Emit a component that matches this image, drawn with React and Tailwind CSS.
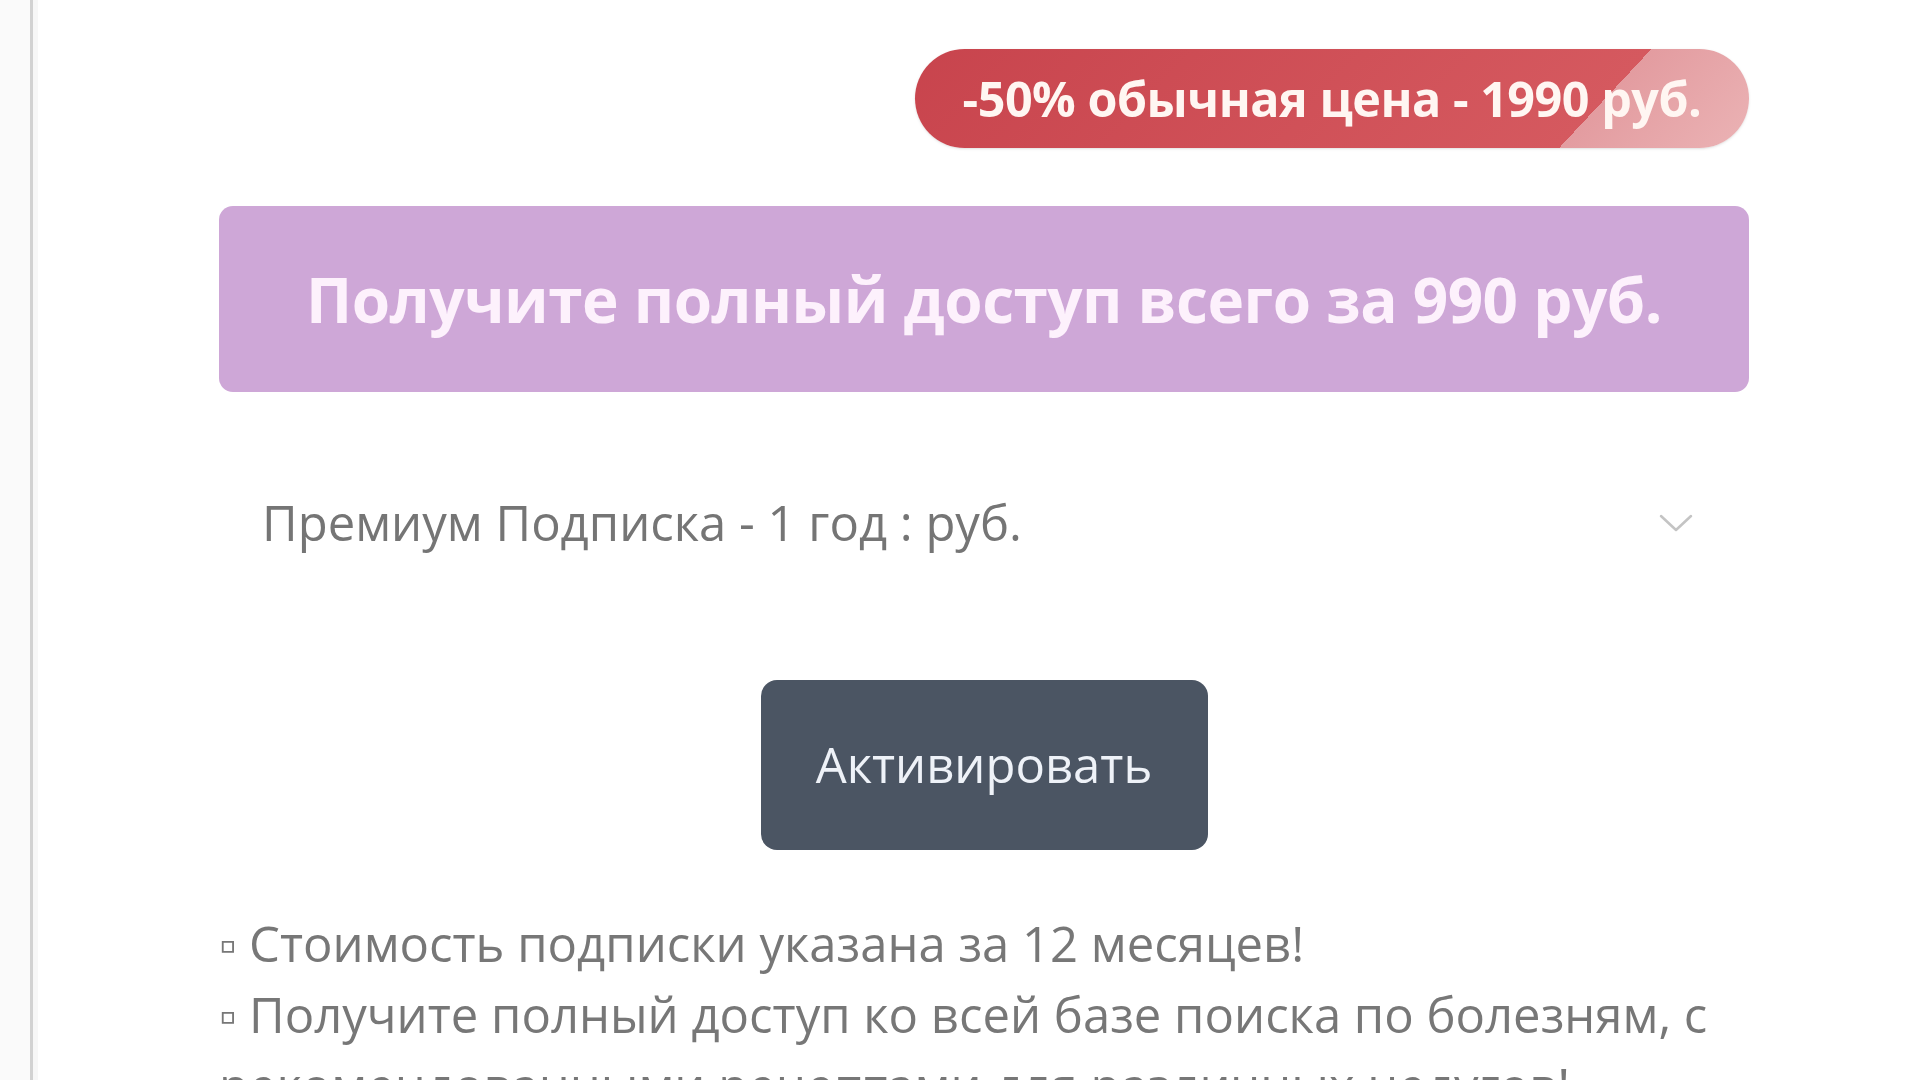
import React from "react";

const font = { fontFamily: '"Open Sans", "Noto Sans", sans-serif' };

export default function App() {
  return (
    <div className="min-h-screen w-full bg-white flex overflow-hidden" style={font}>
      <div className="w-[30px] shrink-0 bg-[#fafafa]" />
      <div className="w-[3px] shrink-0 bg-[#d2d2d2]" />
      <div className="w-[5px] shrink-0 bg-[#f7f7f7]" />

      <div className="flex-1 pl-[181px] pr-[171px]">
        {/* Discount badge */}
        <div className="flex justify-end pt-[49px]">
          <div className="h-[99px] w-[834px] rounded-full flex items-center justify-center shadow-sm bg-[linear-gradient(133deg,#c8444d_0%,#d5595f_79.5%,#e39ca0_79.5%,#ebb3b5_100%)]">
            <span className="text-[48.5px] font-bold text-[#fff6f2] tracking-[-0.5px] leading-none">
              -50% обычная цена - 1990 руб.
            </span>
          </div>
        </div>

        {/* Main offer */}
        <div className="mt-[58px] h-[186px] rounded-[14px] bg-[#cea7d7] flex items-center justify-center">
          <span className="text-[62px] font-bold text-[#fdf1fc] tracking-[-0.5px] leading-none">
            Получите полный доступ всего за 990 руб.
          </span>
        </div>

        {/* Plan select */}
        <div className="mt-[94px] h-[74px] flex items-center justify-between pl-[43px] pr-[56px]">
          <span className="text-[49px] text-[#757575]">Премиум Подписка - 1 год : руб.</span>
          <svg width="34" height="20" viewBox="0 0 34 20" fill="none">
            <path d="M2 3 L17 17 L32 3" stroke="#c4c4c4" strokeWidth="2.5" strokeLinecap="round" strokeLinejoin="round" />
          </svg>
        </div>

        {/* Activate button */}
        <div className="mt-[120px] flex justify-center">
          <button className="h-[170px] w-[447px] rounded-[16px] bg-[#4b5563] text-[#eef2f8] text-[49px]">
            Активировать
          </button>
        </div>

        {/* Notes */}
        <div className="mt-[58px] text-[49px] leading-[71px] text-[#777777]">
          <p>▫ Стоимость подписки указана за 12 месяцев!</p>
          <p>▫ Получите полный доступ ко всей базе поиска по болезням, с рекомендованными рецептами для различных недугов!</p>
        </div>
      </div>
    </div>
  );
}
